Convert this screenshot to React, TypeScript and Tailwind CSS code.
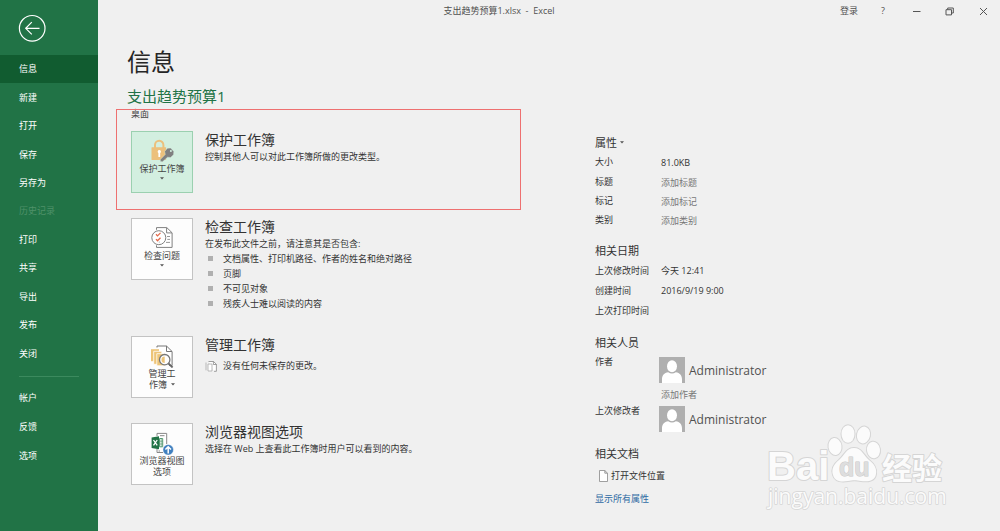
import React from "react";
import clsx from "clsx";

const uiFont = "font-['Open_Sans','Noto_Sans_CJK_SC',sans-serif]";

const primaryNav = ["信息", "新建", "打开", "保存", "另存为", "历史记录", "打印", "共享", "导出", "发布", "关闭"];
const secondaryNav = ["帐户", "反馈", "选项"];

function NavItem({ label }: { label: string }) {
  const active = label === "信息";
  const disabled = label === "历史记录";
  return (
    <button
      type="button"
      disabled={disabled}
      aria-current={active ? "page" : undefined}
      className={clsx(
        "flex w-full items-center pl-[19px] text-left text-[9px] leading-3",
        active && "bg-[#115c30]",
        disabled ? "text-[#4f9169]" : "text-white",
      )}
    >
      {label}
    </button>
  );
}

function Sidebar() {
  return (
    <aside className="flex w-[98px] shrink-0 flex-col bg-[#217346]">
      <button type="button" aria-label="返回" className="mt-[14px] ml-[18px] size-7">
        <svg viewBox="0 0 28 28" className="size-7" fill="none" stroke="#fff" strokeWidth="1.2">
          <circle cx="14.2" cy="14.3" r="12.8" />
          <path d="M21.5 14.3H8M13.8 8.2 7.7 14.3l6.1 6.1" />
        </svg>
      </button>
      <nav className="mt-[13px]">
        <div className="grid h-[313px] auto-rows-fr">
          {primaryNav.map((label) => (
            <NavItem key={label} label={label} />
          ))}
        </div>
        <hr className="mt-2 mr-[19px] mb-[7px] ml-[19px] border-t border-[#3c8a5e]" />
        <div className="grid h-[86px] auto-rows-fr">
          {secondaryNav.map((label) => (
            <NavItem key={label} label={label} />
          ))}
        </div>
      </nav>
    </aside>
  );
}

function TitleBar() {
  return (
    <header className="flex h-[22px] items-center text-[9px] text-[#505050]">
      <div className="flex-1 pr-[22px] pl-[82px] text-center whitespace-pre">支出趋势预算1.xlsx  -  Excel</div>
      <div className="flex items-center gap-[19px] pr-3">
        <button type="button">登录</button>
        <button type="button" aria-label="帮助" className="w-3">?</button>
        <button type="button" aria-label="最小化" className="ml-1">
          <svg viewBox="0 0 9 9" className="size-[9px]" fill="none" stroke="#555"><path d="M1 4.5h7.500" /></svg>
        </button>
        <button type="button" aria-label="还原" className="ml-[5px]">
          <svg viewBox="0 0 9 9" className="size-[9px]" fill="none" stroke="#555">
            <path d="M1 2.7h5.5v5.2H1zM2.7 2.5V1h5.6v5H6.7" />
          </svg>
        </button>
        <button type="button" aria-label="关闭窗口" className="ml-[6px]">
          <svg viewBox="0 0 9 9" className="size-[9px]" fill="none" stroke="#555"><path d="m1 1 7 7M8 1 1 8" /></svg>
        </button>
      </div>
    </header>
  );
}

function Caret({ className }: { className?: string }) {
  return (
    <svg viewBox="0 0 4 3" className={clsx("h-[3px] w-1", className)} fill="#555" aria-hidden="true">
      <path d="M0 .3h4L2 2.6z" />
    </svg>
  );
}

function LockIcon() {
  return (
    <svg viewBox="0 0 24 24" className="size-6" aria-hidden="true">
      <path d="M5 9V6.100a4.2 4.4 0 0 1 8.400 0V9" fill="none" stroke="#ecc07c" strokeWidth="2" />
      <rect x="1.5" y="8.2" width="14.6" height="12.8" rx=".5" fill="#ecc07c" />
      <path d="M9.3 11a1.7 1.7 0 0 1 .9 3.1v3.8H8.400v-3.8A1.7 1.7 0 0 1 9.3 11z" fill="#fff" />
      <path d="m17.4 9.3 3.200-.3 3.200 3.400-.3 3.300-3 2.800-3-.3-5 4.600-2.200-.2.1-2.200 4.900-5-.6-3z" fill="#808080" stroke="#d3efe0" strokeWidth=".4" />
      <circle cx="20.9" cy="12.1" r="1" fill="#d3efe0" />
    </svg>
  );
}

function InspectIcon() {
  return (
    <svg viewBox="0 0 24 24" className="size-6" fill="none" stroke="#808080" aria-hidden="true">
      <path d="M6.5 3.8V1.6h10.3l5.3 5.2v14.6H6.5v-2.1" fill="#fff" />
      <path d="M16.6 1.8v5.1H22" />
      <path d="M17 10.5h3M17.3 13.4H20M16 16.4h4" stroke="#999" />
      <circle cx="8.8" cy="11.7" r="7" fill="#fff" />
      <path d="m6 8.3 1.5 1.6 3-3M6 13.1l1.5 1.6 3-3" stroke="#e3694a" strokeWidth="1.3" />
      <path d="M8.8 16.1h.9" stroke="#999" />
    </svg>
  );
}

function ManageIcon() {
  return (
    <svg viewBox="0 0 24 24" className="size-6" fill="none" aria-hidden="true">
      <path d="M7 3.5V2h9.5l5.6 5.5v14h-3" stroke="#777" fill="#fff" />
      <path d="M16.5 2v5.5H22" stroke="#777" />
      <path d="M1 5.2h8v12H1z" fill="#edc477" />
      <path d="M3.7 7.3h8.1v13H3.7z" fill="#edc477" stroke="#fff" strokeWidth=".8" />
      <path d="M6.8 9.7h8v12.1h-8z" fill="#edc477" stroke="#fff" strokeWidth=".8" />
      <circle cx="14.7" cy="15.7" r="5.2" fill="#fff" stroke="#777" strokeWidth="1.3" />
      <path d="M14.7 12.5v6.4a3.2 3.2 0 0 1 0-6.4z" fill="#edc477" />
      <path d="m18.5 19.5 4.1 4" stroke="#666" strokeWidth="1.8" />
    </svg>
  );
}

function BrowserIcon() {
  return (
    <svg viewBox="0 0 24 24" className="size-6" fill="none" aria-hidden="true">
      <path d="M7 5V2.4h9.7V13M7 18v3.5h6" stroke="#888" fill="#fff" />
      <path d="M10 4.7h4.5M8.5 20h1.5" stroke="#888" />
      <path d="M9.5 7.5h3.2v8.3H9.5z" stroke="#559b72" fill="#fff" />
      <path d="M11.2 7.5v8.3M9.5 10.2h3.2M9.5 13h3.2" stroke="#559b72" strokeWidth=".7" />
      <path d="m1.6 6.5 7.4-1.3v13l-7.4-1.3z" fill="#217346" />
      <path d="m3.5 9 3.7 5.4M7.2 9l-3.7 5.4" stroke="#fff" strokeWidth="1.3" />
      <circle cx="18.2" cy="18.8" r="5.3" fill="#3f7fbf" stroke="#fff" strokeWidth=".5" />
      <path d="M18.2 22.4v-6.4M15.4 18.5l2.8-2.8 2.8 2.8" stroke="#fff" strokeWidth="1.5" />
    </svg>
  );
}

interface ActionProps {
  icon: React.ReactNode;
  caption: React.ReactNode;
  title: string;
  highlighted?: boolean;
  children: React.ReactNode;
}

function ActionRow({ icon, caption, title, highlighted, children }: ActionProps) {
  return (
    <section className="flex items-start gap-3">
      <button
        type="button"
        className={clsx(
          "flex h-[62px] w-[62px] shrink-0 flex-col items-center border pt-[7px] text-[9px] leading-[11px] text-[#444]",
          highlighted ? "border-[#9bd0b0] bg-[#d3efe0]" : "border-[#c3c3c3] bg-[#fdfdfd]",
        )}
      >
        {icon}
        {caption}
      </button>
      <div className="text-[9px] leading-[15px] text-[#333]">
        <h2 className="text-[14px] leading-[18px]">{title}</h2>
        {children}
      </div>
    </section>
  );
}

function Actions() {
  return (
    <div className="relative ml-1 flex flex-col gap-[25px]">
      <div className="pointer-events-none absolute -top-[22px] -right-[2px] -left-[15px] h-[101px] border border-[#ee7070]" />
      <ActionRow highlighted icon={<LockIcon />} title="保护工作簿" caption={<><span>保护工作簿</span><Caret className="mt-[3px]" /></>}>
        <p>控制其他人可以对此工作簿所做的更改类型。</p>
      </ActionRow>
      <ActionRow icon={<InspectIcon />} title="检查工作簿" caption={<><span>检查问题</span><Caret className="mt-[3px]" /></>}>
        <p>在发布此文件之前，请注意其是否包含:</p>
        <ul>
          {["文档属性、打印机路径、作者的姓名和绝对路径", "页脚", "不可见对象", "残疾人士难以阅读的内容"].map((item) => (
            <li key={item} className="flex items-center gap-[10px] pl-[3px]">
              <span className="size-[5px] bg-[#b0b0b0]" />
              {item}
            </li>
          ))}
        </ul>
      </ActionRow>
      <ActionRow
        icon={<ManageIcon />}
        title="管理工作簿"
        caption={<><span>管理工</span><span className="flex items-center gap-1">作簿<Caret /></span></>}
      >
        <p className="mt-1 flex items-center gap-[6px]">
          <svg viewBox="0 0 12 12" className="size-3" fill="none" stroke="#888" strokeWidth=".8" aria-hidden="true">
            <path d="M3.5 1.5h5l2.9 2.8v7H9" fill="#fff" />
            <path d="M8.4 1.5v3h3" />
            <path d="M3 4h4v7H3zM1 2.5v7.8" fill="#fff" stroke="#aaa" />
          </svg>
          没有任何未保存的更改。
        </p>
      </ActionRow>
      <ActionRow icon={<BrowserIcon />} title="浏览器视图选项" caption={<><span>浏览器视图</span><span>选项</span></>}>
        <p>选择在 Web 上查看此工作簿时用户可以看到的内容。</p>
      </ActionRow>
    </div>
  );
}

function EditableRow({ id, label, placeholder }: { id: string; label: string; placeholder: string }) {
  return (
    <div className="grid grid-cols-[66px_1fr] items-center">
      <label htmlFor={id}>{label}</label>
      <input id={id} placeholder={placeholder} className="mt-[2px] h-[17px] w-full bg-transparent placeholder:text-[#777]" />
    </div>
  );
}

function ValueRow({ label, value }: { label: string; value?: string }) {
  return (
    <div className="grid grid-cols-[66px_1fr] leading-5">
      <dt>{label}</dt>
      <dd>{value}</dd>
    </div>
  );
}

function Person() {
  return (
    <div className="flex items-center gap-1 text-[12px] text-[#505050]">
      <svg viewBox="0 0 26 26" className="-ml-[2px] size-[26px]" aria-hidden="true">
        <path d="M0 0h26v26H0z" fill="#afafaf" />
        <ellipse cx="13" cy="9.3" rx="5" ry="6" fill="#fff" />
        <path d="M3 26v-3.5c0-4.2 2.2-6.8 6.2-7.3 2.3 1.8 5.3 1.8 7.6 0 4 .5 6.2 3.1 6.2 7.3V26z" fill="#fff" />
      </svg>
      Administrator
    </div>
  );
}

function Properties() {
  return (
    <div className="pt-[111px] text-[9px] leading-[19px] text-[#333]">
      <button type="button" className="mb-px flex h-[18px] items-center gap-[3px] text-[11px]">
        属性
        <Caret />
      </button>
      <dl className="grid grid-cols-[66px_1fr] text-[9px] leading-[19px]">
        <dt>大小</dt>
        <dd className="pt-px">81.0KB</dd>
      </dl>
      <EditableRow id="title" label="标题" placeholder="添加标题" />
      <EditableRow id="tags" label="标记" placeholder="添加标记" />
      <EditableRow id="category" label="类别" placeholder="添加类别" />
      <h3 className="mt-3 text-[11px] leading-5">相关日期</h3>
      <dl>
        <ValueRow label="上次修改时间" value="今天 12:41" />
        <ValueRow label="创建时间" value="2016/9/19 9:00" />
        <ValueRow label="上次打印时间" />
      </dl>
      <h3 className="mt-3 text-[11px] leading-5">相关人员</h3>
      <div className="mt-1 grid grid-cols-[66px_1fr] leading-[9px]">
        <label htmlFor="author">作者</label>
        <div>
          <Person />
          <input id="author" placeholder="添加作者" className="block h-[23px] w-full bg-transparent placeholder:text-[#777]" />
        </div>
        <span>上次修改者</span>
        <Person />
      </div>
      <h3 className="mt-3 text-[11px] leading-5">相关文档</h3>
      <button type="button" className="ml-1 flex h-[23px] items-center gap-[3px]">
        <svg viewBox="0 0 9 12" className="h-3 w-[9px]" fill="#fff" stroke="#888" strokeWidth=".8" aria-hidden="true">
          <path d="M.5.5h5.3l2.7 2.7v8.3h-8zM5.8.5v2.7h2.7" />
        </svg>
        打开文件位置
      </button>
      <a href="#properties" className="mt-[2px] block text-[#2f6ba3]">显示所有属性</a>
    </div>
  );
}

function Watermark() {
  return (
    <svg
      viewBox="0 0 184 90"
      className="pointer-events-none absolute right-[51px] bottom-[19px] h-[90px] w-[184px] font-['Liberation_Sans','Noto_Sans_CJK_SC',sans-serif]"
      fill="#fbfbfb"
      stroke="#d5d5d5"
      strokeWidth="2"
      strokeLinejoin="round"
      paintOrder="stroke"
      aria-hidden="true"
    >
      <text x="2" y="58" fontSize="40" fontWeight="700">Bai</text>
      <ellipse cx="70" cy="24.500" rx="6.500" ry="8.500" transform="rotate(-8 70 24.500)" />
      <ellipse cx="83" cy="12" rx="6.500" ry="8.800" />
      <ellipse cx="98.500" cy="13" rx="6.500" ry="8.500" transform="rotate(12 98.500 13)" />
      <ellipse cx="108.500" cy="28" rx="6.500" ry="8.300" transform="rotate(-8 108.500 28)" />
      <path d="M89 26c-8 0-9 7-15 12-5 4-8 9-6 15 2 7 9 7 15 6 5-1 8-1 13 0 7 1 14 0 15-7 1-6-2-10-7-14-6-5-7-12-15-12z" />
      <text x="74" y="54" fontSize="25" fontWeight="700" fill="#dedede" stroke="#c8c8c8" strokeWidth="1">du</text>
      <text x="117" y="57" fontSize="30" fontWeight="700">经验</text>
      <text x="3" y="82" fontSize="21" strokeWidth="1.500" className="font-['Open_Sans',sans-serif]">jingyan.baidu.com</text>
    </svg>
  );
}

export default function App() {
  return (
    <div className={clsx("relative flex min-h-screen bg-[#f0f0f0]", uiFont)}>
      <Sidebar />
      <div className="flex min-w-0 flex-1 flex-col">
        <TitleBar />
        <main className="grid flex-1 grid-cols-[392px_1fr] gap-x-[76px] pl-[29px]">
          <div className="pt-6">
            <h1 className="text-[24px] leading-8 text-[#262626]">信息</h1>
            <p className="mt-2 text-[15px] leading-5 text-[#217346]">支出趋势预算1</p>
            <p className="mt-[2px] mb-[11px] ml-1 text-[9px] leading-3 text-[#444]">桌面</p>
            <Actions />
          </div>
          <Properties />
        </main>
      </div>
      <Watermark />
    </div>
  );
}
